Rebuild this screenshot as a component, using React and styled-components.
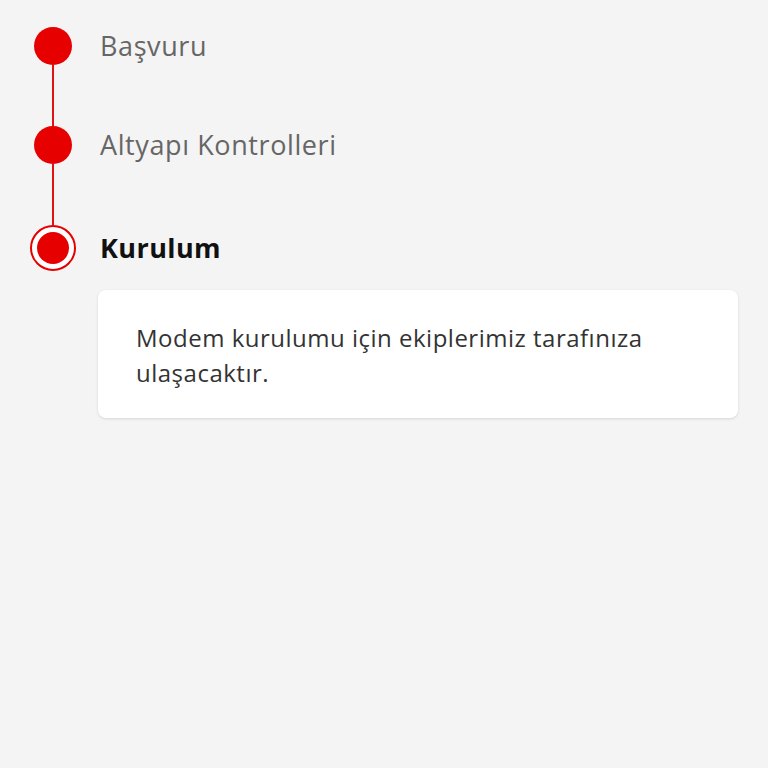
import React from "react";
import styled, { createGlobalStyle } from "styled-components";

const Global = createGlobalStyle`
  html, body { margin: 0; padding: 0; background: #f4f4f4; }
  body { font-family: "Open Sans", "Noto Sans", sans-serif; }
`;

const Page = styled.div`
  min-height: 768px;
  background: #f4f4f4;
  padding: 27px 30px 0 29px;
  box-sizing: border-box;
`;

const Step = styled.div`
  display: flex;
  min-height: ${(p) => (p.$last ? "auto" : "99px")};
`;

const Rail = styled.div`
  width: 48px;
  display: flex;
  flex-direction: column;
  align-items: center;
  flex-shrink: 0;
`;

const Dot = styled.div`
  width: 38px;
  height: 38px;
  border-radius: 50%;
  background: #e60000;
  flex-shrink: 0;
`;

const Ring = styled.div`
  width: 46px;
  height: 46px;
  border-radius: 50%;
  border: 2.5px solid #e60000;
  box-sizing: border-box;
  display: flex;
  align-items: center;
  justify-content: center;
  background: #fff;
  flex-shrink: 0;
`;

const RingCore = styled.div`
  width: 32px;
  height: 32px;
  border-radius: 50%;
  background: #e60000;
`;

const Connector = styled.div`
  width: 2px;
  flex: 1;
  background: #e11414;
`;

const Body = styled.div`
  flex: 1;
  display: flex;
  flex-direction: column;
  margin-left: 21px;
`;

const Label = styled.div`
  font-size: 27px;
  height: ${(p) => (p.$active ? "46px" : "38px")};
  line-height: ${(p) => (p.$active ? "46px" : "38px")};
  margin-left: 2px;
  color: ${(p) => (p.$active ? "#111" : "#666")};
  font-weight: ${(p) => (p.$active ? 700 : 400)};
  letter-spacing: ${(p) => (p.$active ? "0.4px" : "0.6px")};
`;

const Card = styled.div`
  margin-top: 19px;
  background: #fff;
  border-radius: 8px;
  padding: 30px 38px 28px 38px;
  box-shadow: 0 1px 3px rgba(0, 0, 0, 0.12);
  font-size: 24px;
  line-height: 35px;
  color: #333;
  letter-spacing: 0.5px;
`;

const steps = [
  { title: "Başvuru", done: true },
  { title: "Altyapı Kontrolleri", done: true },
];

export default function App() {
  return (
    <>
      <Global />
      <Page>
        {steps.map((s) => (
          <Step key={s.title}>
            <Rail>
              <Dot />
              <Connector />
            </Rail>
            <Body>
              <Label>{s.title}</Label>
            </Body>
          </Step>
        ))}
        <Step $last>
          <Rail>
            <Ring>
              <RingCore />
            </Ring>
          </Rail>
          <Body>
            <Label $active>Kurulum</Label>
            <Card>
              Modem kurulumu için ekiplerimiz tarafınıza
              <br />
              ulaşacaktır.
            </Card>
          </Body>
        </Step>
      </Page>
    </>
  );
}
